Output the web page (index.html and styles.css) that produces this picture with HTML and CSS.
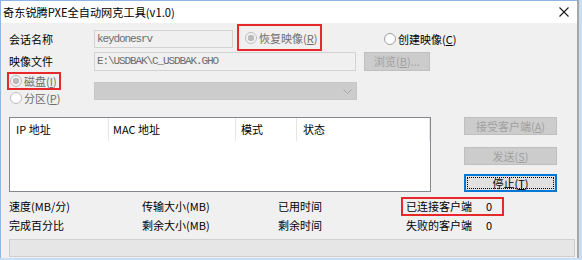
FILE: index.html
```html
<!DOCTYPE html>
<html lang="zh-CN">
  <head>
    <meta charset="UTF-8" />
    <title>奇东锐腾PXE全自动网克工具(v1.0)</title>
    <link rel="stylesheet" href="styles.css">
  </head>

  <body>
    <div class="window">
      <div class="titlebar">
        <span class="title">奇东锐腾PXE全自动网克工具(v1.0)</span>
        <svg class="close" width="10" height="10" viewBox="0 0 10 10">
          <path d="M0.5 0.5 L9.5 9.5 M9.5 0.5 L0.5 9.5" stroke="#1a1a1a" stroke-width="1.1" fill="none" />
        </svg>
      </div>

      <div class="client">
        <div class="row row-session">
          <span class="label">会话名称</span>
          <div class="field field-session">keydonesrv</div>
          <div class="mark mark-restore">
            <span class="radio checked"></span>
            <span class="opt-text dim">恢复映像(<u>R</u>)</span>
          </div>
          <div class="opt opt-create">
            <span class="radio on"></span>
            <span class="opt-text">创建映像(<u>C</u>)</span>
          </div>
        </div>

        <div class="row row-image">
          <span class="label">映像文件</span>
          <div class="field field-image">E:\USDBAK\C_USDBAK.GHO</div>
          <div class="btn btn-browse">浏览(<u>B</u>)...</div>
        </div>

        <div class="row row-target">
          <div class="targets">
            <div class="mark mark-disk">
              <span class="radio checked"></span>
              <span class="opt-text dim">磁盘(<u>I</u>)</span>
            </div>
            <div class="opt opt-part">
              <span class="radio"></span>
              <span class="opt-text dim">分区(<u>P</u>)</span>
            </div>
          </div>
          <div class="combo">
            <svg width="9" height="5" viewBox="0 0 9 5">
              <polyline points="0.5,0.5 4.5,4.5 8.5,0.5" stroke="#a6a6a6" stroke-width="1" fill="none" />
            </svg>
          </div>
        </div>

        <div class="row row-list">
          <div class="listbox">
            <div class="list-head">
              <span class="col col-ip">IP 地址</span>
              <span class="col col-mac">MAC 地址</span>
              <span class="col col-mode">模式</span>
              <span class="col col-state">状态</span>
            </div>
          </div>
          <div class="buttons">
            <div class="btn btn-side">接受客户端(<u>A</u>)</div>
            <div class="btn btn-side btn-send">发送(<u>S</u>)</div>
            <div class="btn btn-side btn-stop"><span>停止(<u>T</u>)</span></div>
          </div>
        </div>

        <div class="stats">
          <div class="stat-row">
            <span class="stat c1">速度(MB/分)</span>
            <span class="stat c2">传输大小(MB)</span>
            <span class="stat c3">已用时间</span>
            <div class="conn hot">
              <span class="stat conn-label">已连接客户端</span>
              <span class="stat">0</span>
            </div>
          </div>
          <div class="stat-row">
            <span class="stat c1">完成百分比</span>
            <span class="stat c2">剩余大小(MB)</span>
            <span class="stat c3">剩余时间</span>
            <div class="conn">
              <span class="stat conn-label">失败的客户端</span>
              <span class="stat">0</span>
            </div>
          </div>
        </div>

        <div class="progress"></div>
      </div>
    </div>
  </body>
</html>
```

FILE: styles.css
```css
:root {
  --face: #f0f0f0;
  --frame: #8fb6e3;
  --mark: #e8292b;
  --dim: #6d6d6d;
  --disabled-bg: #cccccc;
  --disabled-text: #a0a0a0;
  --focus: #0078d7;
}

* {
  margin: 0;
  padding: 0;
  box-sizing: border-box;
}

body {
  width: 582px;
  height: 260px;
  overflow: hidden;
  background: #c9ddf3;
  font-family: "Noto Sans CJK SC", "Liberation Sans", sans-serif;
  font-size: 11px;
  color: #000;
}

.window {
  width: 579px;
  height: 258px;
  display: flex;
  flex-direction: column;
  background: var(--face);
  border-left: 1px solid var(--frame);
  border-top: 1px solid var(--frame);
  border-right: 2px solid #a7a7a7;
}

.titlebar {
  height: 22px;
  background: #fff;
  display: flex;
  align-items: center;
  justify-content: space-between;
  padding: 0 8px 0 2px;
}

.title {
  line-height: 16px;
  font-size: 11.2px;
}

.client {
  flex: 1;
  padding-left: 8px;
}

.row {
  display: flex;
  align-items: flex-start;
}

.label {
  width: 85px;
  line-height: 18px;
}

/* disabled edit boxes */
.field {
  height: 18px;
  border: 1px solid #d2d2d2;
  background: var(--face);
  color: var(--dim);
  font-family: "Liberation Mono", monospace;
  font-size: 11px;
  letter-spacing: -1.1px;
  line-height: 16px;
  padding-left: 2px;
  white-space: nowrap;
  overflow: hidden;
}

.btn {
  background: var(--disabled-bg);
  border: 1px solid #bfbfbf;
  color: var(--disabled-text);
  display: flex;
  align-items: center;
  justify-content: center;
  line-height: 15px;
  white-space: nowrap;
}

/* red highlight boxes */
.mark {
  display: flex;
  align-items: center;
  border: 2px solid var(--mark);
}

.opt {
  display: flex;
  align-items: center;
}

.radio {
  flex: none;
  width: 12px;
  height: 12px;
  border: 1px solid #bcbcbc;
  border-radius: 50%;
  background: #fff;
}

.radio.checked {
  background: radial-gradient(circle, #bcbcbc 0 3px, #f4f4f4 3.6px);
}

.radio.on {
  border-color: #a0a0a0;
}

.opt-text {
  margin-left: 2px;
  line-height: 16px;
  white-space: nowrap;
}

.dim {
  color: var(--dim);
}

/* row 1 */
.row-session {
  margin-top: 1px;
  height: 27px;
}

.row-session .label,
.field-session {
  margin-top: 6px;
}

.field-session {
  width: 139px;
}

.mark-restore {
  margin-left: 4px;
  width: 85px;
  height: 27px;
  padding-left: 6px;
}

.opt-create {
  margin-left: 62px;
  margin-top: 7px;
}

/* row 2 */
.row-image {
  margin-top: 1px;
  height: 19px;
}

.row-image .label {
  line-height: 19px;
}

.field-image {
  width: 262px;
  height: 19px;
  line-height: 17px;
}

.btn-browse {
  margin-left: 8px;
  width: 66px;
  height: 19px;
}

/* row 3 */
.row-target {
  margin-top: 1px;
}

.targets {
  margin-left: -2px;
  width: 87px;
}

.mark-disk {
  width: 54px;
  height: 18px;
  padding-left: 1px;
}

.opt-part {
  margin-top: 1px;
  height: 13px;
  padding-left: 3px;
}

.combo {
  margin-top: 10px;
  width: 263px;
  height: 18px;
  background: var(--disabled-bg);
  border: 1px solid #c6c6c6;
  display: flex;
  align-items: center;
  justify-content: flex-end;
  padding-right: 4px;
}

/* client list + actions */
.row-list {
  margin-top: 13px;
}

.listbox {
  width: 422px;
  height: 75px;
  background: #fff;
  border: 1px solid #828790;
}

.list-head {
  display: flex;
  height: 23px;
}

.col {
  border-right: 1px solid #e5e5e5;
  line-height: 23px;
  padding-left: 5px;
  white-space: nowrap;
}

.col-ip {
  width: 99px;
  padding-left: 6px;
}

.col-mac {
  width: 127px;
  padding-left: 4px;
}

.col-mode {
  width: 61px;
}

.col-state {
  width: 133px;
  padding-left: 6px;
}

.buttons {
  margin-left: 33px;
  width: 93px;
  display: flex;
  flex-direction: column;
}

.btn-side {
  height: 18px;
}

.btn-send {
  margin-top: 12px;
}

.btn-stop {
  margin-top: 9px;
  background: #e1e1e1;
  border: 2px solid var(--focus);
  color: #000;
  padding: 1px;
}

.btn-stop span {
  flex: 1;
  align-self: stretch;
  border: 1px dotted #000;
  text-align: center;
  line-height: 10px;
}

/* counters */
.stats {
  margin-top: 5px;
}

.stat-row {
  display: flex;
  align-items: center;
  height: 19px;
}

.stat {
  line-height: 15px;
  white-space: nowrap;
}

.c1 {
  width: 133px;
}

.c2 {
  width: 136px;
}

.c3 {
  width: 123px;
}

.conn {
  display: flex;
  align-items: center;
  width: 103px;
  height: 19px;
  border: 2px solid transparent;
  padding-left: 3px;
}

.conn.hot {
  border-color: var(--mark);
}

.conn-label {
  width: 80px;
}

.progress {
  margin-top: 4px;
  width: 566px;
  height: 18px;
  border: 1px solid #cfcfcf;
  background: #e6e6e6;
}
```
